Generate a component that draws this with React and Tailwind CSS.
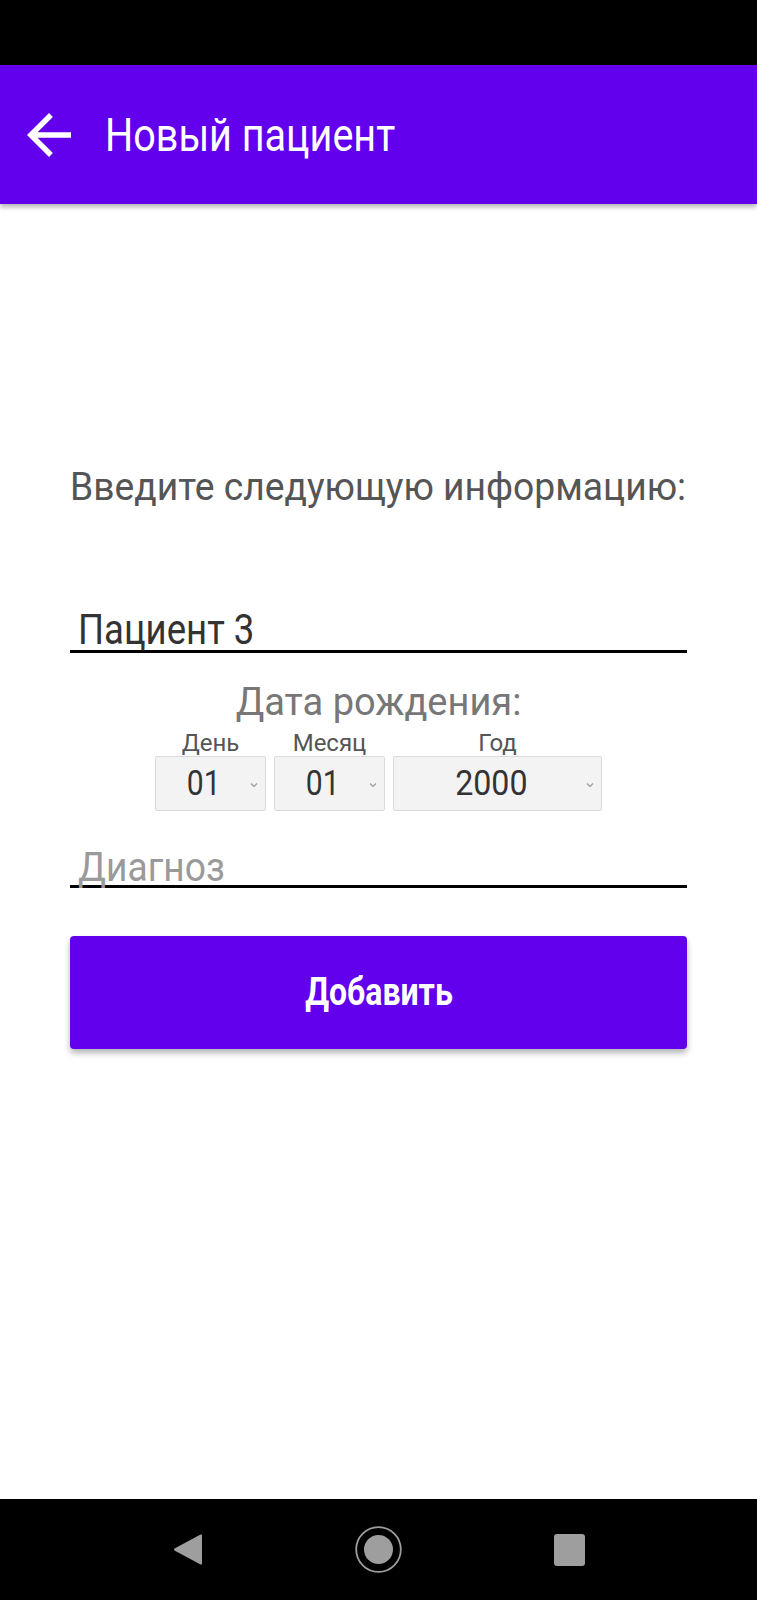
import React from 'react';

const font = { fontFamily: 'Roboto, "Noto Sans", sans-serif' };

function BackArrow() {
  return (
    <svg width="66" height="66" viewBox="0 0 24 24" fill="white">
      <path d="M20 11H7.83l5.59-5.59L12 4l-8 8 8 8 1.41-1.41L7.83 13H20v-2z" />
    </svg>
  );
}

function Chevron() {
  return (
    <svg width="8" height="6" viewBox="0 0 8 6" className="shrink-0">
      <path d="M1 1.5l3 3 3-3" fill="none" stroke="#9a9a9a" strokeWidth="1.2" />
    </svg>
  );
}

function Spinner({ label, children, width }) {
  return (
    <div className="flex flex-col items-center" style={{ width }}>
      <div className="text-[24px] leading-[26px] text-[#555555]">{label}</div>
      <div className="relative w-full h-[55px] bg-[#f3f3f3] border border-[#dadada] rounded-[2px] flex items-center justify-center pr-[13px]">
        {children}
        <div className="absolute right-[7px] top-[25px]">
          <Chevron />
        </div>
      </div>
    </div>
  );
}

export default function App() {
  return (
    <div className="w-[757px] h-[1600px] flex flex-col bg-white" style={font}>
      {/* status bar */}
      <div className="h-[65px] bg-black shrink-0" />

      {/* app bar */}
      <div className="h-[139px] shrink-0 bg-[#6200ee] flex items-center pl-[16px] gap-[23px] shadow-[0_3px_5px_rgba(0,0,0,0.3)] relative z-10">
        <BackArrow />
        <span className="inline-block origin-left scale-x-[0.86] whitespace-nowrap text-white text-[46px] leading-none">
          Новый пациент
        </span>
      </div>

      {/* form */}
      <div className="flex-1 px-[70px] flex flex-col">
        <div className="mt-[259px] text-[39px] leading-[48px] text-[#555555] whitespace-nowrap">
          <span className="inline-block origin-left scale-x-[0.955]">Введите следующую информацию:</span>
        </div>

        <div className="mt-[99px] h-[43px] leading-[40px] border-b-[3px] border-black pl-[8px] text-[42px] text-[#333333] whitespace-nowrap">
          <span className="inline-block origin-left scale-x-[0.87]">Пациент 3</span>
        </div>

        <div className="mt-[27px] text-center text-[38px] leading-[44px] text-[#777777]">
          Дата рождения:
        </div>

        <div className="mt-[6px] flex justify-center gap-[8px]">
          <Spinner label="День" width={111}>
            <span className="inline-block scale-x-[0.86] text-[35px] leading-none text-[#333333]">01</span>
          </Spinner>
          <Spinner label="Месяц" width={111}>
            <span className="inline-block scale-x-[0.86] text-[35px] leading-none text-[#333333]">01</span>
          </Spinner>
          <Spinner label="Год" width={209}>
            <span className="inline-block scale-x-[0.92] text-[35px] leading-none text-[#333333]">2000</span>
          </Spinner>
        </div>

        <div className="mt-[37px] h-[40px] leading-[40px] border-b-[3px] border-black pl-[8px] text-[40px] text-[#9a9a9a] whitespace-nowrap">
          <span className="inline-block origin-left scale-x-[0.93]">Диагноз</span>
        </div>

        <button className="mt-[48px] h-[113px] w-full rounded-[4px] bg-[#6200ee] text-white font-bold text-[39px] shadow-[0_4px_6px_rgba(0,0,0,0.3)]">
          <span className="inline-block scale-x-[0.82]">Добавить</span>
        </button>
      </div>

      {/* nav bar */}
      <div className="h-[101px] shrink-0 bg-black flex items-center justify-center gap-[152px]">
        <svg width="30" height="31" viewBox="0 0 30 31">
          <path d="M28 1.5L2 15.5L28 29.5Z" fill="#9e9e9e" stroke="#9e9e9e" strokeWidth="2" strokeLinejoin="round" />
        </svg>
        <svg width="47" height="47" viewBox="0 0 47 47">
          <circle cx="23.5" cy="23.5" r="22.3" fill="none" stroke="#9e9e9e" strokeWidth="1.8" />
          <circle cx="23.5" cy="23.5" r="14.5" fill="#9e9e9e" />
        </svg>
        <div className="w-[31px] h-[32px] rounded-[3px] bg-[#9e9e9e]" />
      </div>
    </div>
  );
}
